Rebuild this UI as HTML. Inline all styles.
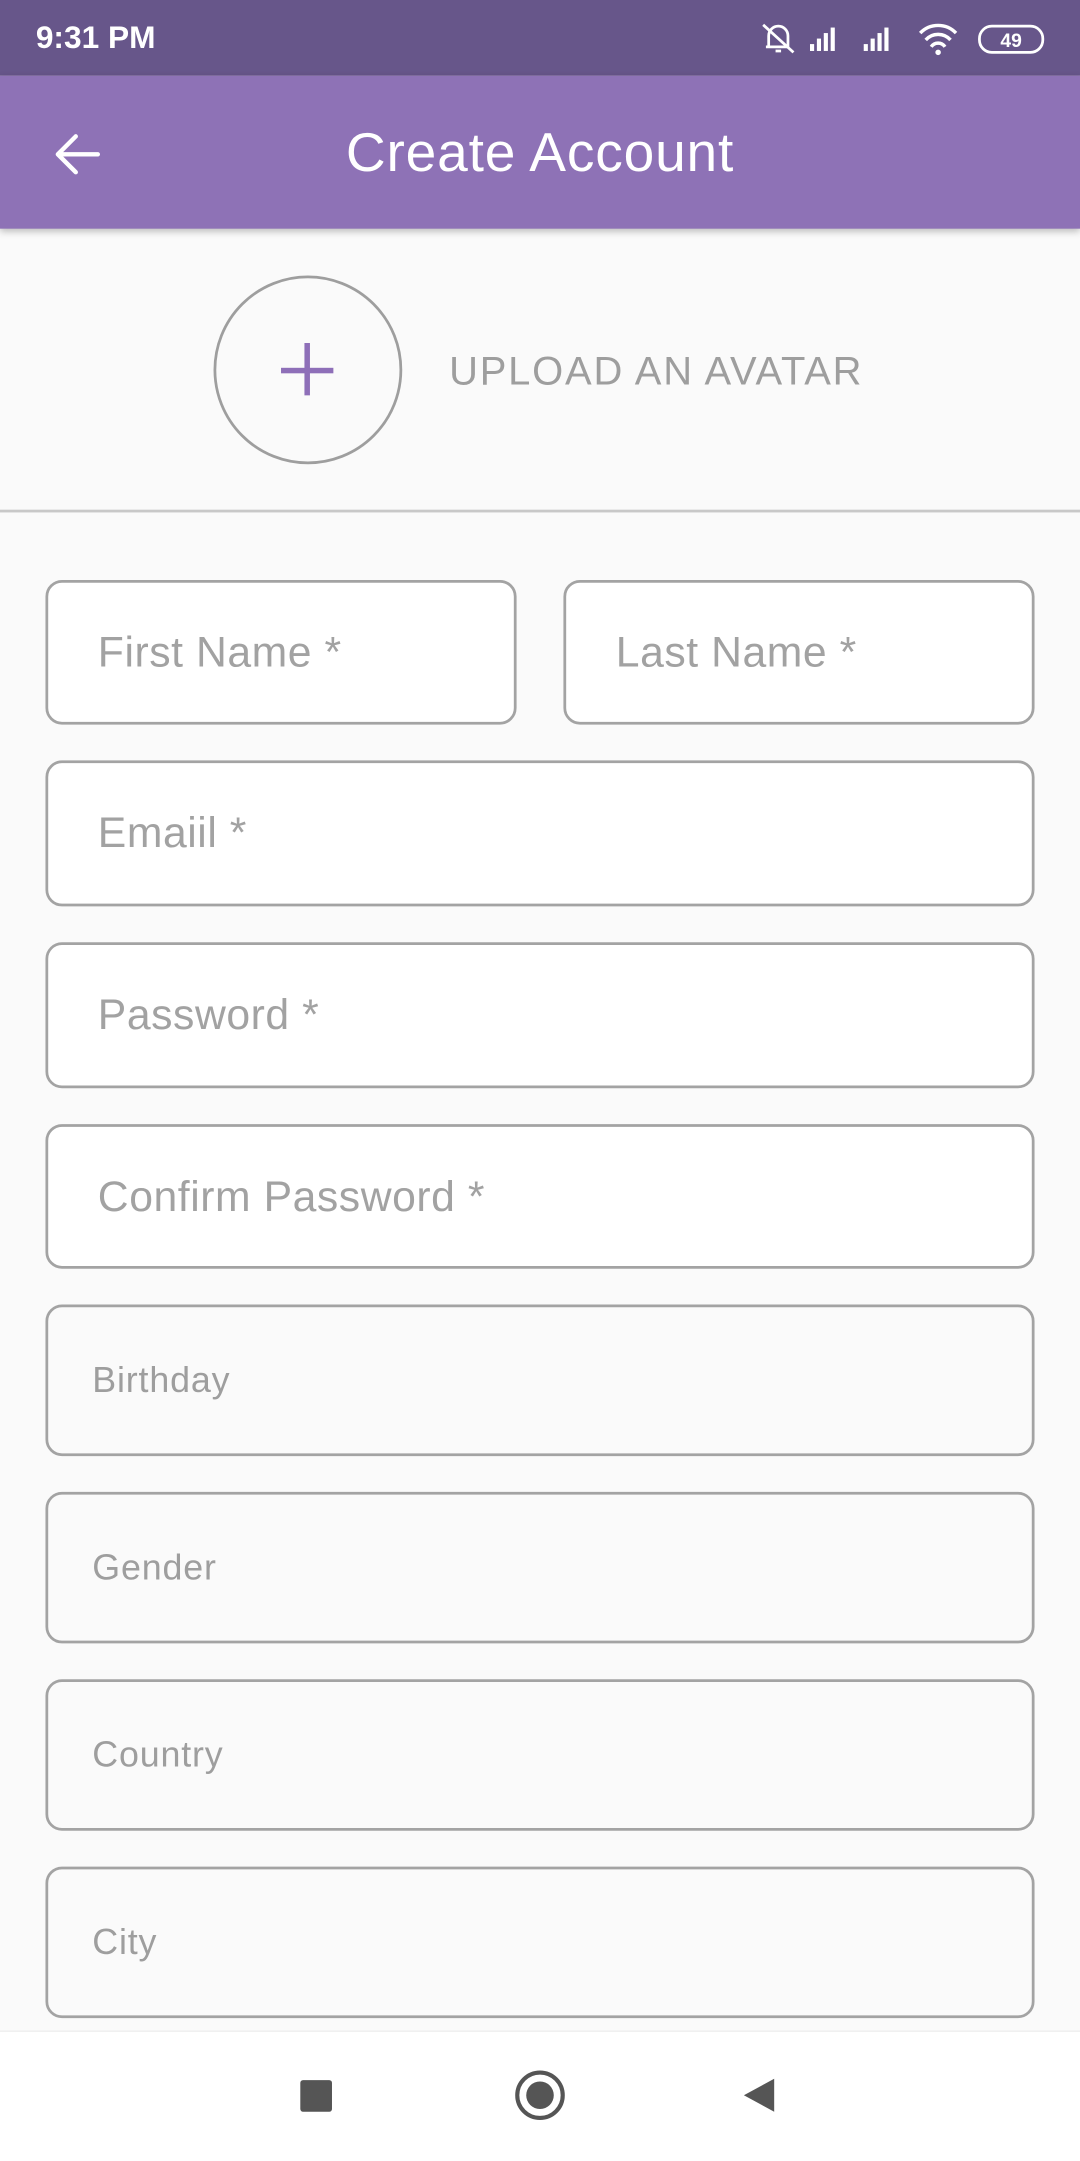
<!DOCTYPE html>
<html><head><meta charset="utf-8"><style>
html,body{margin:0;padding:0;width:1080px;height:2160px;overflow:hidden;background:#fafafa;}
#w{position:absolute;left:0;top:0;width:784px;height:1568px;transform:scale(1.377551);transform-origin:0 0;font-family:"Liberation Sans",sans-serif;background:#fafafa;}
.a{position:absolute;}
.f{position:absolute;box-sizing:border-box;border:2px solid #a3a3a3;border-radius:12px;background:#fff;}
.f span{position:absolute;left:36px;top:50%;transform:translateY(-50%);font-size:31px;color:#a2a2a2;letter-spacing:0.4px;}
.g{position:absolute;box-sizing:border-box;border:2px solid #a3a3a3;border-radius:12px;background:#fafafa;left:33px;width:718px;height:110px;}
.g span{position:absolute;left:32px;top:50%;transform:translateY(-50%);font-size:26px;color:#9e9e9e;letter-spacing:0.6px;}
</style></head><body><div id="w">
<div class="a" style="left:0;top:0;width:784px;height:55px;background:#67568a"></div>
<div class="a" style="left:26px;top:14px;font-size:23px;font-weight:bold;color:#fff">9:31 PM</div>
<svg class="a" style="left:550px;top:14px" width="210" height="28" viewBox="0 0 210 28">
<g fill="none" stroke="#fff" stroke-width="2"><path d="M8 20 V12 a7 7 0 0 1 14 0 V20 H6 z"/><path d="M4 4 L26 24"/><path d="M13 23 h4"/></g>
<g fill="#fff"><rect x="38" y="18" width="3" height="5"/><rect x="43" y="14" width="3" height="9"/><rect x="48" y="10" width="3" height="13"/><rect x="53" y="6" width="3" height="17"/>
<rect x="77" y="18" width="3" height="5"/><rect x="82" y="14" width="3" height="9"/><rect x="87" y="10" width="3" height="13"/><rect x="92" y="6" width="3" height="17"/></g>
<g fill="none" stroke="#fff" stroke-width="2.5"><path d="M118 10 a18 18 0 0 1 26 0"/><path d="M122 15 a12 12 0 0 1 18 0"/><path d="M126 20 a6 6 0 0 1 10 0"/></g>
<circle cx="131" cy="24" r="2" fill="#fff"/>
<rect x="161" y="5" width="46" height="19" rx="9" fill="none" stroke="#fff" stroke-width="2"/>
<text x="184" y="20" font-size="14" fill="#fff" text-anchor="middle" font-family="Liberation Sans" font-weight="bold">49</text></svg>
<div class="a" style="left:0;top:55px;width:784px;height:111px;background:#8e72b6;box-shadow:0 2px 5px rgba(0,0,0,.25)"></div>
<svg class="a" style="left:38px;top:95px" width="36" height="34" viewBox="0 0 36 34"><g fill="none" stroke="#fff" stroke-width="3.2" stroke-linecap="round" stroke-linejoin="round"><path d="M33 17 H4 M17 4 L4 17 L17 30"/></g></svg>
<div class="a" style="left:0;width:784px;top:89px;text-align:center;font-size:40px;color:#fff;letter-spacing:0.6px;">Create Account</div>
<div class="a" style="left:155px;top:200px;width:133px;height:133px;border:2.5px solid #9e9e9e;border-radius:50%;"></div>
<div class="a" style="left:204px;top:267px;width:38px;height:3.5px;background:#8e6fb8"></div>
<div class="a" style="left:221px;top:249px;width:3.5px;height:38px;background:#8e6fb8"></div>
<div class="a" style="left:326px;top:254px;font-size:29px;color:#9e9e9e;letter-spacing:1.3px;">UPLOAD AN AVATAR</div>
<div class="a" style="left:0;top:370px;width:784px;height:1.5px;background:#c8c8c8"></div>
<div class="f" style="left:33px;top:421px;width:342px;height:105px"><span>First Name *</span></div>
<div class="f" style="left:409px;top:421px;width:342px;height:105px"><span>Last Name *</span></div>
<div class="f" style="left:33px;top:552px;width:718px;height:106px"><span>Emaiil *</span></div>
<div class="f" style="left:33px;top:684px;width:718px;height:106px"><span>Password *</span></div>
<div class="f" style="left:33px;top:816px;width:718px;height:105px"><span>Confirm Password *</span></div>
<div class="g" style="top:947px"><span>Birthday</span></div>
<div class="g" style="top:1083px"><span>Gender</span></div>
<div class="g" style="top:1219px"><span>Country</span></div>
<div class="g" style="top:1355px"><span>City</span></div>
<div class="a" style="left:0;top:1474px;width:784px;height:94px;background:#fff;border-top:1px solid #eee"></div>
<div class="a" style="left:218px;top:1510px;width:23px;height:23px;background:#555;border-radius:2px"></div>
<div class="a" style="left:374px;top:1503px;width:30px;height:30px;border:3px solid #555;border-radius:50%"></div>
<div class="a" style="left:382px;top:1511px;width:20px;height:20px;background:#555;border-radius:50%"></div>
<svg class="a" style="left:538px;top:1507px" width="26" height="28" viewBox="0 0 26 28"><path d="M2 14 L24 2 V26 Z" fill="#555"/></svg>
</div></body></html>
